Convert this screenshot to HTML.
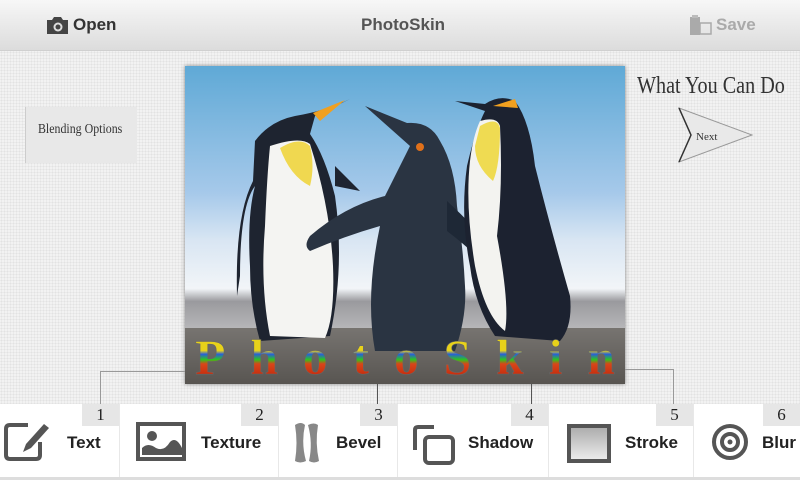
<!DOCTYPE html>
<html><head><meta charset="utf-8"><style>
*{margin:0;padding:0;box-sizing:border-box}
body{width:800px;height:480px;overflow:hidden;position:relative;font-family:"Liberation Sans",sans-serif;
background-color:#f2f2f2;background-image:radial-gradient(#e2e2e2 0.8px,transparent 1px);background-size:3px 3px}
.hdr{position:absolute;left:0;top:0;width:800px;height:51px;background:linear-gradient(#f7f7f7,#dcdcdc);border-bottom:1px solid #d0d0d0}
.hdr span{position:absolute;top:15px;font-weight:bold;font-size:17px;color:#333}
.abs{position:absolute}
.tab{position:absolute;top:404px;height:74px;background:#fff;border-right:1px solid #e8e8e8}
.num{position:absolute;top:0;right:0;width:37px;height:22px;background:#e6e6e6;font-family:"Liberation Serif",serif;font-size:17px;color:#222;text-align:center;line-height:22px}
.lbl{position:absolute;top:29px;font-weight:bold;font-size:17px;color:#222}
.ln{position:absolute;background:#999}
</style></head><body>
<div class="hdr">
 <svg class="abs" style="left:46px;top:16px" width="23" height="19" viewBox="0 0 23 19"><path d="M1 4h5l2-3h7l2 3h5v14H1z" fill="#444"/><circle cx="12" cy="11" r="4.5" fill="#ddd"/><circle cx="12" cy="11" r="2.5" fill="#444"/></svg>
 <span style="left:73px">Open</span>
 <span style="left:361px;color:#555">PhotoSkin</span>
 <svg class="abs" style="left:689px;top:15px" width="24" height="20" viewBox="0 0 24 20"><rect x="1" y="2" width="10" height="18" fill="#aaa"/><rect x="3" y="0" width="6" height="3" fill="#bbb"/><rect x="11" y="8" width="11" height="11" fill="none" stroke="#aaa" stroke-width="1.5"/></svg>
 <span style="left:716px;color:#aaa">Save</span>
</div>
<div class="abs" style="left:25px;top:107px;width:112px;height:56px;background:#e8e8e8;border-left:1px solid #ccc"></div>
<div class="abs" style="left:38px;top:122px;font-family:'Liberation Serif',serif;font-size:14px;color:#333;white-space:nowrap;transform:scaleX(0.85);transform-origin:left">Blending Options</div>
<div class="abs" style="left:637px;top:73px;font-family:'Liberation Serif',serif;font-size:24px;color:#333;transform:scaleX(0.84);transform-origin:left;white-space:nowrap">What You Can Do</div>
<svg class="abs" style="left:676px;top:106px" width="80" height="60" viewBox="0 0 80 60"><path d="M3 2 L76 29 L3 56 L15 29 Z" fill="#e9e9e9" stroke="#999" stroke-width="1"/><path d="M3 2 L15 29 L3 56" fill="none" stroke="#333" stroke-width="1.5"/><text x="20" y="34" font-family="Liberation Serif" font-size="11" fill="#333">Next</text></svg>

<svg class="abs" style="left:185px;top:66px;box-shadow:0 0 4px #888" width="440" height="318" viewBox="0 0 440 318">
<defs>
<linearGradient id="sky" x1="0" y1="0" x2="0" y2="1"><stop offset="0" stop-color="#5fa9d6"/><stop offset="0.4" stop-color="#a6c9ea"/><stop offset="0.55" stop-color="#d9e6f3"/><stop offset="0.7" stop-color="#f2f5f8"/><stop offset="0.74" stop-color="#9a9a9e"/><stop offset="0.83" stop-color="#b8b8ba"/><stop offset="1" stop-color="#555"/></linearGradient>
<linearGradient id="rb" gradientUnits="userSpaceOnUse" x1="0" y1="272" x2="0" y2="308"><stop offset="0" stop-color="#e8d21a"/><stop offset="0.35" stop-color="#e8d21a"/><stop offset="0.45" stop-color="#2a5fd8"/><stop offset="0.6" stop-color="#2ec41e"/><stop offset="0.72" stop-color="#d8461a"/><stop offset="1" stop-color="#c83010"/></linearGradient>
</defs>
<rect width="440" height="318" fill="url(#sky)"/>
<rect y="262" width="440" height="56" fill="#5a5550" opacity="0.7"/>
<path d="M70 75 Q85 55 110 50 Q140 45 165 33 L130 50 L125 68 Q140 90 150 130 Q160 200 145 270 L75 275 Q65 240 65 200 Q62 150 70 120 Q55 140 55 210 L52 230 Q50 150 68 115 Z" fill="#1e2430"/>
<path d="M85 80 Q115 70 125 78 Q145 140 148 200 Q150 250 140 272 L85 270 Q75 220 80 160 Q82 110 85 80Z" fill="#f4f4f2"/>
<path d="M95 82 Q115 70 125 80 Q130 100 125 120 Q105 110 95 82Z" fill="#f0d850"/>
<path d="M150 100 L175 125 L150 120Z" fill="#1e2430"/>
<path d="M180 40 L222 57 Q245 55 255 75 Q270 100 272 140 Q278 180 280 220 Q282 250 270 285 L190 285 Q180 230 195 160 Q160 170 125 185 Q118 180 125 170 Q160 140 200 130 Q215 100 225 80 Z" fill="#2a3442"/>
<path d="M262 135 Q300 170 330 210 Q340 230 325 225 Q295 190 262 165Z" fill="#1e2836"/>
<circle cx="235" cy="81" r="4" fill="#e0701a"/>
<path d="M270 35 L300 38 Q315 28 330 35 Q345 55 350 100 Q365 160 385 230 Q388 260 375 275 L310 270 Q290 240 285 200 Q275 150 282 100 Q290 65 300 45 Z" fill="#1c2230"/>
<path d="M295 55 Q312 50 315 60 Q318 120 312 170 Q325 240 320 265 Q300 250 290 200 Q280 140 285 95 Q288 70 295 55Z" fill="#f3f3f0"/>
<path d="M295 60 Q312 50 315 62 Q315 100 308 115 Q290 100 290 80Z" fill="#efdb52"/>
<path d="M308 40 L330 33 L333 42Z" fill="#f0a020"/>
<path d="M128 47 L160 34 L135 55Z" fill="#f0a020"/>
<text x="10" y="308" font-family="Liberation Serif" font-weight="bold" font-size="50" fill="url(#rb)" stroke="#666" stroke-width="0.6" textLength="420" lengthAdjust="spacing">PhotoSkin</text>
</svg>

<div class="ln" style="left:100px;top:371px;width:85px;height:1px"></div>
<div class="ln" style="left:100px;top:371px;width:1px;height:33px"></div>
<div class="ln" style="left:377px;top:384px;width:1px;height:20px;background:#555"></div>
<div class="ln" style="left:531px;top:384px;width:1px;height:20px;background:#555"></div>
<div class="ln" style="left:625px;top:369px;width:48px;height:1px"></div>
<div class="ln" style="left:673px;top:369px;width:1px;height:35px"></div>

<div class="tab" style="left:0;width:120px"><div class="num">1</div>
 <svg class="abs" style="left:4px;top:18px" width="50" height="40" viewBox="0 0 50 40"><path d="M24 3H6Q2 3 2 7v26q0 4 4 4h26q4 0 4-4V20" fill="none" stroke="#555" stroke-width="4"/><path d="M40 2l5 4-18 20-8 4 3-8z" fill="#555"/></svg>
 <div class="lbl" style="left:67px">Text</div></div>
<div class="tab" style="left:120px;width:159px"><div class="num">2</div>
 <svg class="abs" style="left:16px;top:18px" width="52" height="40" viewBox="0 0 52 40"><rect x="2" y="2" width="46" height="35" fill="none" stroke="#555" stroke-width="4"/><circle cx="16" cy="14" r="5" fill="#555"/><path d="M6 33v-7q6-6 14 0 8 4 14-6 6-6 12 6v7z" fill="#555"/></svg>
 <div class="lbl" style="left:81px">Texture</div></div>
<div class="tab" style="left:279px;width:119px"><div class="num">3</div>
 <svg class="abs" style="left:14px;top:18px" width="30" height="42" viewBox="0 0 30 42"><path d="M2 3q6-4 10 0-4 18 1 36-6 3-11 0 3-18 0-36z" fill="#888"/><path d="M15 3q6-3 10 0-3 18 1 36-5 3-10 0 4-18-1-36z" fill="#888"/></svg>
 <div class="lbl" style="left:57px">Bevel</div></div>
<div class="tab" style="left:398px;width:151px"><div class="num">4</div>
 <svg class="abs" style="left:14px;top:20px" width="44" height="42" viewBox="0 0 44 42"><path d="M22 3H6q-3 0-3 3v20" fill="none" stroke="#555" stroke-width="4"/><rect x="13" y="13" width="28" height="26" rx="4" fill="none" stroke="#555" stroke-width="4"/></svg>
 <div class="lbl" style="left:70px">Shadow</div></div>
<div class="tab" style="left:549px;width:145px"><div class="num">5</div>
 <svg class="abs" style="left:18px;top:20px" width="46" height="40" viewBox="0 0 46 40"><defs><linearGradient id="sg" x1="0" y1="0" x2="0" y2="1"><stop offset="0" stop-color="#aaa"/><stop offset="1" stop-color="#eee"/></linearGradient></defs><rect x="2" y="2" width="40" height="35" fill="url(#sg)" stroke="#555" stroke-width="4"/></svg>
 <div class="lbl" style="left:76px">Stroke</div></div>
<div class="tab" style="left:694px;width:106px;border-right:none"><div class="num">6</div>
 <svg class="abs" style="left:16px;top:18px" width="40" height="40" viewBox="0 0 40 40"><circle cx="20" cy="20" r="16" fill="none" stroke="#555" stroke-width="4"/><circle cx="20" cy="20" r="8" fill="none" stroke="#555" stroke-width="4"/><circle cx="20" cy="20" r="2.5" fill="#555"/></svg>
 <div class="lbl" style="left:68px">Blur</div></div>
<div class="abs" style="left:0;top:477px;width:800px;height:3px;background:#ddd"></div>
</body></html>
